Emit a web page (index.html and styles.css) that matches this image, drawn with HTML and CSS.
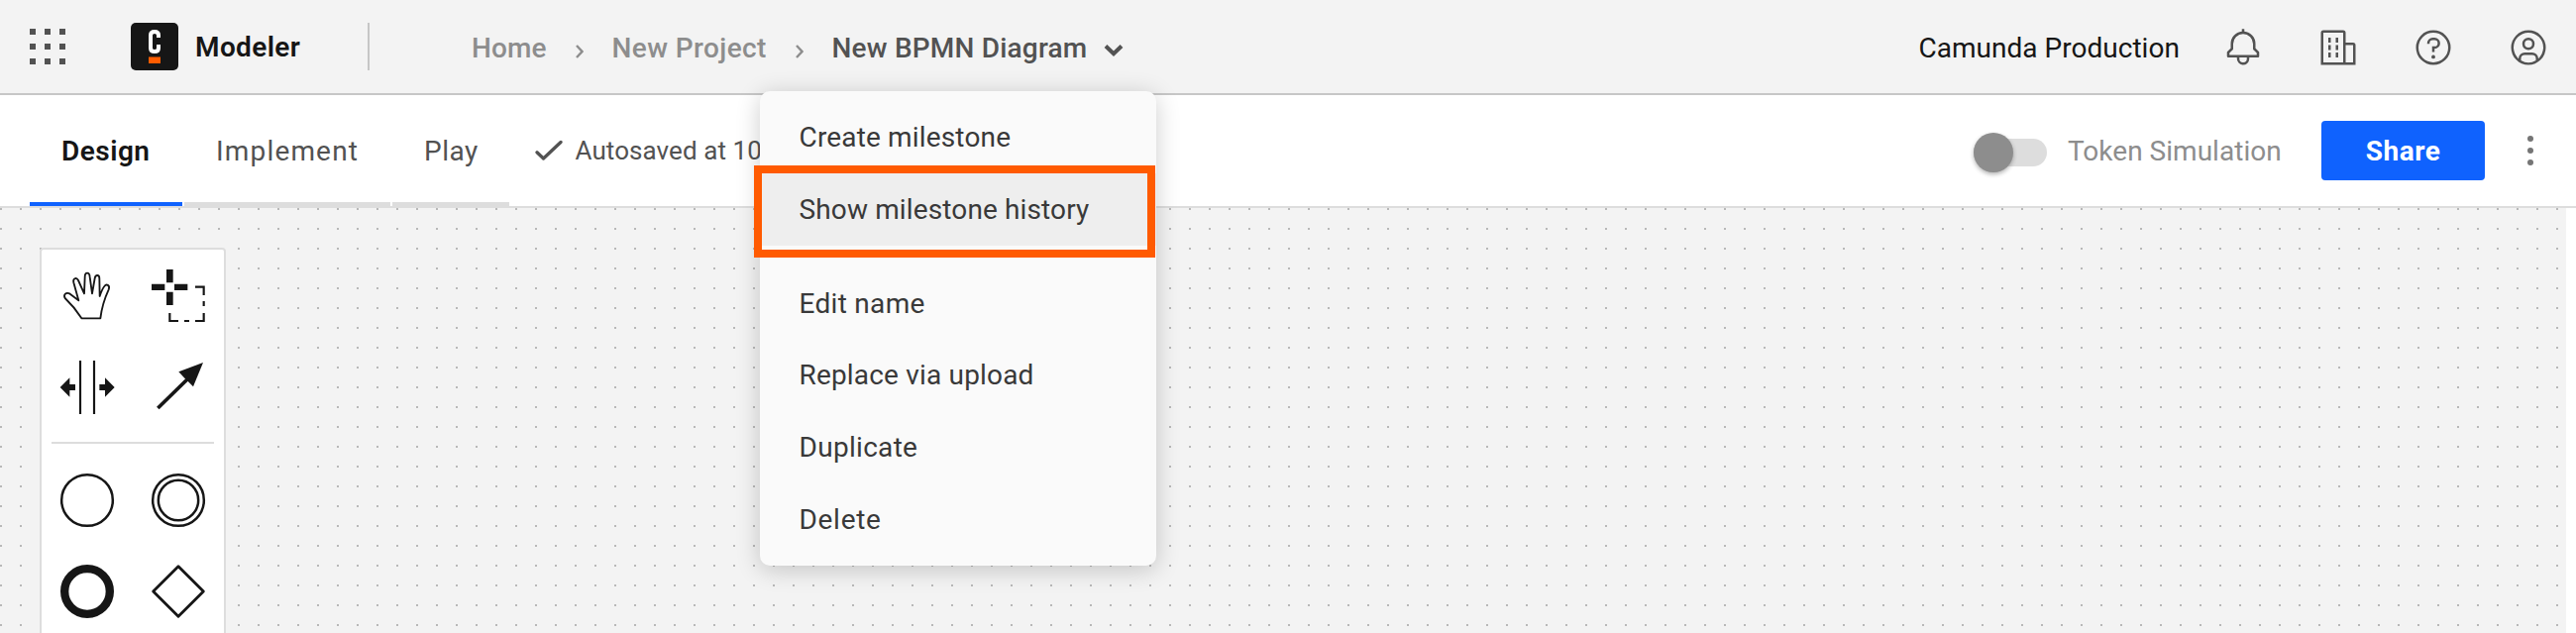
FILE: index.html
```html
<!DOCTYPE html>
<html lang="en">
<head>
<meta charset="utf-8">
<title>Modeler</title>
<link rel="stylesheet" href="styles.css">
</head>
<body>
<div class="app">
  <header class="header">
    <div class="app-grid"><i></i><i></i><i></i><i></i><i></i><i></i><i></i><i></i><i></i></div>
    <svg class="logo" viewBox="0 0 48 48">
      <rect width="48" height="48" rx="5" fill="#161616"/>
      <path d="M28 15V12.500Q28 9 24 9T20 12.500V25.500Q20 29 24 29T28 25.500V22" fill="none" stroke="#fff" stroke-width="4"/>
      <rect x="18" y="34.500" width="12" height="6.500" fill="#ff5c00"/>
    </svg>
    <strong class="product">Modeler</strong>
    <span class="divider"></span>
    <nav class="crumbs">
      <a class="crumb home">Home</a>
      <svg class="sep" viewBox="0 0 8 14"><path d="M1 1l5.500 6L1 13" fill="none" stroke="#8d8d8d" stroke-width="2.400"/></svg>
      <a class="crumb project">New Project</a>
      <svg class="sep" viewBox="0 0 8 14"><path d="M1 1l5.500 6L1 13" fill="none" stroke="#8d8d8d" stroke-width="2.400"/></svg>
      <a class="crumb current">New BPMN Diagram</a>
      <svg class="caret" viewBox="0 0 20 14"><path d="M2 2.500l8 7.800 8-7.800" fill="none" stroke="#525252" stroke-width="4"/></svg>
    </nav>
    <span class="org">Camunda Production</span>
    <div class="actions">
      <svg viewBox="0 0 32 32"><path d="M28.707 19.293 26 16.586V13a10.014 10.014 0 0 0-9-9.949V1h-2v2.051A10.014 10.014 0 0 0 6 13v3.586l-2.707 2.707A1 1 0 0 0 3 20v3a1 1 0 0 0 1 1h7v.777a5.152 5.152 0 0 0 4.500 5.199A5.006 5.006 0 0 0 21 25v-1h7a1 1 0 0 0 1-1v-3a1 1 0 0 0-.293-.707ZM19 25a3 3 0 0 1-6 0v-1h6Zm8-3H5v-1.586l2.707-2.707A1 1 0 0 0 8 17v-4a8 8 0 0 1 16 0v4a1 1 0 0 0 .293.707L27 20.414Z"/></svg>
      <svg viewBox="0 0 32 32"><path d="M8 8h2v4H8zM14 8h2v4h-2zM8 14h2v4H8zM14 14h2v4h-2zM8 20h2v4H8zM14 20h2v4h-2z"/><path d="M30 14a2 2 0 0 0-2-2h-6V4a2 2 0 0 0-2-2H4a2 2 0 0 0-2 2v26h28ZM4 4h16v24H4Zm18 24V14h6v14Z"/></svg>
      <svg viewBox="0 0 32 32"><path d="M16 2a14 14 0 1 0 14 14A14 14 0 0 0 16 2Zm0 26a12 12 0 1 1 12-12 12 12 0 0 1-12 12Z"/><circle cx="16" cy="23.500" r="1.500"/><path d="M17 8h-1.500a4.490 4.490 0 0 0-4.500 4.500v.5h2v-.5a2.500 2.500 0 0 1 2.500-2.500H17a2.500 2.500 0 0 1 0 5h-2v4.500h2V17a4.500 4.500 0 0 0 0-9Z"/></svg>
      <svg viewBox="0 0 32 32"><path d="M16 8a5 5 0 1 0 5 5 5 5 0 0 0-5-5Zm0 8a3 3 0 1 1 3-3 3.003 3.003 0 0 1-3 3Z"/><path d="M16 2a14 14 0 1 0 14 14A14.016 14.016 0 0 0 16 2Zm-6 24.377V25a3.003 3.003 0 0 1 3-3h6a3.003 3.003 0 0 1 3 3v1.377a11.899 11.899 0 0 1-12 0Zm13.993-1.451A5.002 5.002 0 0 0 19 20h-6a5.002 5.002 0 0 0-4.993 4.926 12 12 0 1 1 15.985 0Z"/></svg>
    </div>
  </header>

  <div class="toolbar">
    <div class="tabs">
      <div class="tab design">Design</div>
      <div class="tab implement">Implement</div>
      <div class="tab play">Play</div>
    </div>
    <div class="autosave">
      <svg viewBox="0 0 28 22"><path d="M2 12.800l6.500 6.200L26 2.500" fill="none" stroke="#525252" stroke-width="3.300" stroke-linecap="round" stroke-linejoin="round"/></svg>
      <span>Autosaved at 10</span>
    </div>
    <div class="toggle"><span class="knob"></span></div>
    <span class="token">Token Simulation</span>
    <button class="share">Share</button>
    <div class="kebab"><i></i><i></i><i></i></div>
  </div>

  <main class="canvas">
    <aside class="palette">
      <div class="tools">
        <svg viewBox="66 66 276 276"><path d="M187 274L244 274C248 240 256 215 269 187C274 173 262 169 256 177C250 184 246 195 242 207L241 153C241 141 229 141 227 153L219 199L212 149C211 133 197 133 197 149L195 199L177 159C171 148 160 154 163 166L178 220L152 200C140 193 131 203 137 213C155 230 172 250 187 274Z" fill="none" stroke="#161616" stroke-width="5.500" stroke-linejoin="round"/></svg>
        <svg viewBox="342 66 276 276"><path d="M444 126h20v40h-20zM444 194h20v40h-20zM399 170h40v19h-40zM468 170h40v19h-40z" fill="#161616"/><path d="M531 179h26v25M557 222v15M557 258v24h-26M513 282h-15M480 282h-26v-24" fill="none" stroke="#161616" stroke-width="6.500"/></svg>
        <svg viewBox="66 342 276 276"><path d="M183 402v162M225 402v162" stroke="#161616" stroke-width="6.500"/><path d="M122 483l29-29v20h17v18h-17v20zM287 483l-29-29v20h-17v18h17v20z" fill="#161616"/></svg>
        <svg viewBox="342 342 276 276"><path d="M418 546L510 456" stroke="#161616" stroke-width="11"/><path d="M555 408l-74 28 18 19 8 8 18 18z" fill="#161616"/></svg>
      </div>
      <hr class="rule">
      <div class="tools">
        <svg viewBox="66 87 276 276"><circle cx="204" cy="225" r="77.500" fill="none" stroke="#161616" stroke-width="7.500"/></svg>
        <svg viewBox="342 87 276 276"><circle cx="480" cy="225" r="77.500" fill="none" stroke="#161616" stroke-width="7.500"/><circle cx="480" cy="225" r="60.500" fill="none" stroke="#161616" stroke-width="7.500"/></svg>
        <svg viewBox="66 363 276 276"><circle cx="204" cy="501" r="68.500" fill="none" stroke="#161616" stroke-width="25"/></svg>
        <svg viewBox="342 363 276 276"><path d="M480 425l76 76-76 76-76-76z" fill="none" stroke="#161616" stroke-width="8.500" stroke-linejoin="round"/></svg>
      </div>
    </aside>
  </main>

  <div class="menu">
    <div class="item create">Create milestone</div>
    <div class="item history">Show milestone history</div>
    <div class="gap"></div>
    <div class="item edit">Edit name</div>
    <div class="item replace">Replace via upload</div>
    <div class="item duplicate">Duplicate</div>
    <div class="item delete">Delete</div>
  </div>
  <div class="highlight"></div>
</div>
</body>
</html>
```
FILE: styles.css
```css
* { box-sizing: border-box; }
body { margin: 0; font-family: Roboto, "Noto Sans", sans-serif; font-size: 28px; line-height: 40px; color: #161616; background: #fff; }
svg { display: block; flex: none; }
.app { position: relative; width: 2600px; height: 639px; overflow: hidden; display: flex; flex-direction: column; }

.header { height: 96px; flex: none; display: flex; align-items: center; padding: 0 28px 0 30px; background: #f3f3f3; border-bottom: 2px solid #c6c6c6; white-space: nowrap; }
.app-grid { display: grid; grid-template-columns: repeat(3, 6px); gap: 9px; width: 36px; }
.app-grid i { height: 6px; background: #525252; }
.logo { width: 48px; height: 48px; margin-left: 66px; }
.product { width: 106px; margin-left: 17px; padding-top: 1px; font-weight: 600; letter-spacing: .38px; }
.divider { width: 2px; height: 48px; margin-left: 68px; background: #c6c6c6; }
.crumbs { display: flex; align-items: center; margin-left: 103px; padding-top: 4px; font-weight: 500; }
.crumb { color: #8d8d8d; }
.home { width: 104.500px; letter-spacing: .12px; }
.sep { width: 8px; height: 14px; margin-top: 6px; }
.project { width: 185px; margin-left: 29px; letter-spacing: .4px; }
.current { width: 274px; margin-left: 29px; color: #525252; letter-spacing: .2px; }
.caret { width: 20px; height: 14px; margin-top: 3px; }
.org { margin-left: auto; margin-right: 45.500px; width: 262px; padding-top: 3px; letter-spacing: .02px; }
.actions { display: flex; gap: 56px; padding-top: 2px; }
.actions svg { width: 40px; height: 40px; fill: #525252; }

.toolbar { height: 114px; flex: none; display: flex; align-items: center; padding: 0 43px 0 30px; border-bottom: 2px solid #ddd; white-space: nowrap; }
.tabs { display: flex; gap: 2px; align-self: stretch; }
.tab { height: 112px; padding: 1px 0 0 32px; line-height: 112px; color: #525252; border-bottom: 4px solid #ddd; }
.design { width: 154px; color: #161616; font-weight: 600; letter-spacing: .48px; border-color: #0f62fe; }
.implement { width: 208px; letter-spacing: 1.17px; }
.play { width: 118px; letter-spacing: .5px; }
.autosave { display: flex; align-items: center; gap: 12.500px; margin-left: 26px; width: 230px; color: #525252; font-size: 26px; letter-spacing: .08px; }
.autosave svg { width: 28px; height: 22px; }
.toggle { margin-left: auto; width: 74px; height: 28px; margin-top: 4px; border-radius: 14px; background: #ddd; display: flex; align-items: center; }
.knob { width: 40px; height: 40px; border-radius: 50%; background: #8d8d8d; box-shadow: 0 2px 4px rgba(0, 0, 0, .3); }
.token { width: 216px; margin-left: 21px; padding-top: 1px; color: #8d8d8d; letter-spacing: .02px; }
.share { width: 165px; height: 60px; margin-left: 40px; padding: 1px 0 0; border: 0; border-radius: 4px; background: #0f62fe; color: #fff; font: 700 28px/59px Roboto, sans-serif; letter-spacing: .5px; }
.kebab { display: grid; gap: 6px; margin-left: 43px; width: 6px; }
.kebab i { height: 6px; border-radius: 50%; background: #757575; }

.canvas { flex: 1; width: 2590px; padding: 40px; background-color: #f3f3f3; background-image: conic-gradient(from 270deg at 2px 2px, #b8b8b8 90deg, transparent 90deg); background-size: 20px 20px; }
.palette { width: 188px; height: 420px; background: #fff; border: 2px solid #ddd; border-radius: 4px; }
.tools { display: grid; grid-template-columns: 92px 92px; grid-auto-rows: 92px; }
.tools svg { width: 92px; height: 92px; }
.rule { height: 2px; margin: 10px 10px 11px; border: 0; background: #ddd; }

.menu { position: absolute; left: 767px; top: 92px; width: 400px; height: 479px; padding-top: 10px; border-radius: 10px; background: #fafafa; color: #393939; box-shadow: 0 4px 24px rgba(0, 0, 0, .2); white-space: nowrap; }
.item { height: 72.750px; padding-left: 39.500px; line-height: 73px; }
.create { letter-spacing: .16px; }
.history { letter-spacing: .13px; background: #eee; }
.gap { height: 22px; }
.edit { letter-spacing: .3px; }
.replace { letter-spacing: .18px; }
.duplicate { letter-spacing: .3px; }
.delete { letter-spacing: .7px; }
.highlight { position: absolute; left: 761px; top: 167px; width: 405px; height: 93px; border: 8px solid #ff5a00; }
```
